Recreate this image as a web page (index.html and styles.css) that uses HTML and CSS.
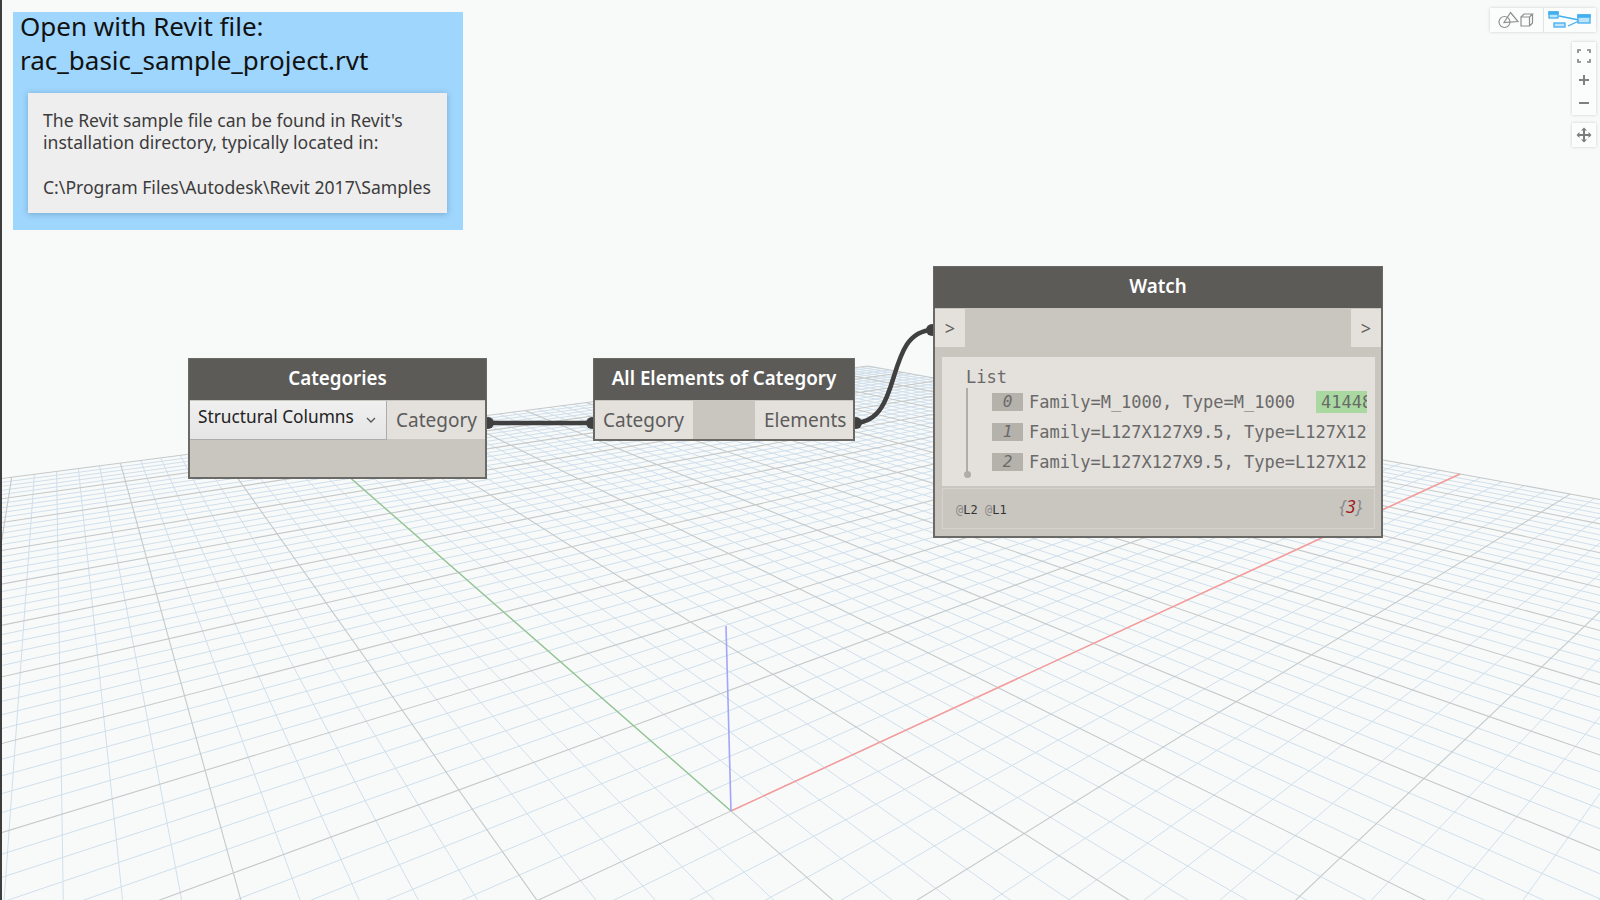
FILE: index.html
```html
<!DOCTYPE html>
<html lang="en">
<head>
    <meta charset="UTF-8">
    <title>Dynamo - Categories to Watch</title>
    <link rel="stylesheet" href="styles.css">
</head>
<body>
<div class="canvas">
    <svg id="grid" class="layer" width="1600" height="900"></svg>

    <svg class="layer" width="1600" height="900">
        <path class="wire" d="M487 423 L593 423"/>
        <path class="wire" d="M855 423 C 905 421, 883 331, 933 330"/>
        <circle class="nub" cx="488" cy="423" r="6"/>
        <circle class="nub" cx="592" cy="423" r="6"/>
        <circle class="nub" cx="856" cy="423" r="6"/>
        <circle class="nub" cx="932" cy="330" r="6"/>
    </svg>

    <div class="left-edge"></div>

    <div class="note">
        <h1 class="note-title">Open with Revit file:<br>rac_basic_sample_project.rvt</h1>
        <div class="note-card">
            <p>The Revit sample file can be found in Revit's<br>installation directory, typically located in:</p>
            <p>C:\Program Files\Autodesk\Revit 2017\Samples</p>
        </div>
    </div>

    <div class="node node-categories">
        <div class="node-header">Categories</div>
        <div class="node-ports">
            <div class="combo">
                <span>Structural Columns</span>
                <svg width="10" height="7" viewBox="0 0 10 7"><path d="M1 1 L5 5 L9 1" fill="none" stroke="#555" stroke-width="1.3"/></svg>
            </div>
            <div class="port port-out">Category</div>
        </div>
    </div>

    <div class="node node-elements">
        <div class="node-header">All Elements of Category</div>
        <div class="node-ports">
            <div class="port">Category</div>
            <div class="port-gap"></div>
            <div class="port">Elements</div>
        </div>
    </div>

    <div class="node node-watch">
        <div class="node-header">Watch</div>
        <div class="watch-ports">
            <div class="chevron">&gt;</div>
            <div class="chevron">&gt;</div>
        </div>
        <div class="watch-list">
            <div class="list-label">List</div>
            <div class="list-rows">
                <div class="row">
                    <span class="row-index">0</span>
                    <span class="row-text">Family=M_1000, Type=M_1000</span>
                    <span class="row-id">41448</span>
                </div>
                <div class="row">
                    <span class="row-index">1</span>
                    <span class="row-text">Family=L127X127X9.5, Type=L127X127X9.5</span>
                </div>
                <div class="row">
                    <span class="row-index">2</span>
                    <span class="row-text">Family=L127X127X9.5, Type=L127X127X9.5</span>
                </div>
            </div>
        </div>
        <div class="watch-footer">
            <span class="levels"><span class="at">@</span>L2 <span class="at">@</span>L1</span>
            <span class="count">{<b>3</b>}</span>
        </div>
    </div>

    <div class="toolbar">
        <div class="tool">
            <svg width="40" height="20" viewBox="0 0 40 20" fill="none" stroke="#8f8f8f" stroke-width="1.2">
                <circle cx="8.5" cy="12" r="5.5"/>
                <path d="M14.500 2.500 L22 11.500 L8 12.500 Z"/>
                <path d="M25 7 h8.500 v9 h-8.500 Z M25 7 l3 -3 h8.500 l-3 3 M33.500 16 l3 -3 v-9"/>
            </svg>
        </div>
        <div class="tool tool-active">
            <svg width="44" height="20" viewBox="0 0 44 20" fill="#bfe3fa" stroke="#41aeef" stroke-width="1.300">
                <path d="M11 6 L31 10 M20 16 L31 11" fill="none"/>
                <rect x="1" y="2" width="9" height="6"/>
                <path d="M1 2 h9 v2 h-9 Z" fill="#41aeef"/>
                <rect x="6" y="13" width="11" height="4"/>
                <rect x="30" y="5" width="12" height="8"/>
                <path d="M30 5 h12 v2 h-12 Z" fill="#41aeef"/>
            </svg>
        </div>
    </div>

    <div class="zoom-box">
        <svg width="14" height="14" viewBox="0 0 14 14" fill="none" stroke="#808080" stroke-width="1.600">
            <path d="M1 4 V1 H4 M10 1 H13 V4 M13 10 V13 H10 M4 13 H1 V10"/>
        </svg>
        <svg width="12" height="12" viewBox="0 0 12 12" fill="none" stroke="#808080" stroke-width="2">
            <path d="M1 6 H11 M6 1 V11"/>
        </svg>
        <svg width="12" height="12" viewBox="0 0 12 12" fill="none" stroke="#808080" stroke-width="2">
            <path d="M1 6 H11"/>
        </svg>
    </div>

    <div class="pan-box">
        <svg width="16" height="16" viewBox="0 0 16 16" fill="#7d7d7d">
            <path d="M7 3.500 H9 V7 H12.500 V5 L15.500 8 L12.500 11 V9 H9 V12.500 H11 L8 15.500 L5 12.500 H7 V9 H3.500 V11 L0.500 8 L3.500 5 V7 H7 V3.500 H5 L8 0.500 L11 3.500 Z"/>
        </svg>
    </div>
</div>
<script src="grid.js"></script>
</body>
</html>
```

FILE: styles.css
```css
body {
    margin: 0;
    background-color: #f8fafa;
    font-family: "Noto Sans", sans-serif;
}
.canvas {
    position: relative;
    width: 1600px;
    height: 900px;
    overflow: hidden;
    background-color: #f8fafa;
}
.layer {
    position: absolute;
    left: 0;
    top: 0;
}
.left-edge {
    position: absolute;
    left: 0;
    top: 0;
    width: 2px;
    height: 900px;
    background-color: #3d3d3d;
}
.wire {
    fill: none;
    stroke: #404040;
    stroke-width: 4.5;
}
.nub {
    fill: #404040;
}

/* note group */
.note {
    position: absolute;
    left: 13px;
    top: 12px;
    width: 450px;
    height: 218px;
    box-sizing: border-box;
    padding: 0 16px 0 15px;
    background-color: #9fd6fd;
}
.note-title {
    margin: -2px 0 0 -8px;
    height: 83px;
    font-size: 26px;
    font-weight: 400;
    line-height: 33.500px;
    color: #111;
    white-space: nowrap;
}
.note-card {
    display: flex;
    flex-direction: column;
    gap: 22px;
    height: 120px;
    box-sizing: border-box;
    padding: 16px 15px;
    background-color: #eeeeee;
    box-shadow: 0 1px 6px rgba(40, 80, 120, 0.35);
    color: #3c3c3c;
    font-size: 17.600px;
    line-height: 22.300px;
    white-space: nowrap;
}
.note-card p {
    margin: 0;
}

/* graph nodes */
.node {
    position: absolute;
    box-sizing: border-box;
    border: 2px solid #6b6965;
    background-color: #c9c5bf;
}
.node-categories {
    left: 188px;
    top: 358px;
    width: 299px;
    height: 121px;
}
.node-elements {
    left: 593px;
    top: 358px;
    width: 262px;
    height: 83px;
}
.node-watch {
    left: 933px;
    top: 266px;
    width: 450px;
    height: 272px;
}
.node-header {
    height: 41px;
    margin: -1px -1px 1px;
    background-color: #5c5b58;
    color: #fff;
    font-size: 18.800px;
    font-weight: 600;
    line-height: 39px;
    text-align: center;
}
.node-ports {
    display: flex;
    height: 38px;
}
.combo {
    display: flex;
    align-items: center;
    justify-content: space-between;
    width: 197px;
    height: 39px;
    box-sizing: border-box;
    padding: 0 10px 8px 8px;
    border-right: 1px solid #acacac;
    border-bottom: 1px solid #acacac;
    background: linear-gradient(#f0f0f0, #e5e5e5);
    color: #222;
    font-size: 17.300px;
}
.combo svg {
    margin-top: 8px;
}
.port {
    width: 98px;
    box-sizing: border-box;
    padding-left: 8px;
    background-color: #e4e0db;
    color: #5c5c5c;
    font-size: 19px;
    line-height: 38px;
}
.port:last-child {
    padding-left: 9px;
}
.port-out {
    width: 98px;
    padding-left: 10px;
}
.port-gap {
    width: 62px;
}

/* watch node */
.watch-ports {
    display: flex;
    justify-content: space-between;
    height: 38px;
}
.chevron {
    width: 30px;
    background-color: #e4e0db;
    color: #5c5c5c;
    font-size: 18px;
    line-height: 38px;
    text-align: center;
}
.watch-list {
    height: 129px;
    box-sizing: border-box;
    margin: 10px 6px 0 7px;
    padding: 8px 0 0 24px;
    background-color: #e4e0db;
    color: #6a6a6a;
    font-family: "DejaVu Sans Mono", monospace;
    font-size: 17px;
    overflow: hidden;
}
.list-label {
    height: 26px;
    line-height: 24px;
}
.list-rows {
    position: relative;
    display: flex;
    flex-direction: column;
    gap: 8px;
    width: 402px;
    box-sizing: border-box;
    padding-left: 26px;
}
.list-rows::before {
    content: "";
    position: absolute;
    left: 0;
    top: -3px;
    width: 2px;
    height: 86px;
    background-color: #b0aca6;
}
.list-rows::after {
    content: "";
    position: absolute;
    left: -2.500px;
    top: 80px;
    width: 7px;
    height: 7px;
    border-radius: 50%;
    background-color: #b0aca6;
}
.row {
    display: flex;
    align-items: center;
    height: 22px;
    white-space: nowrap;
    overflow: hidden;
}
.row-index {
    flex: none;
    width: 31px;
    height: 18px;
    margin-right: 6px;
    background-color: #b5b1ab;
    font-style: italic;
    line-height: 18px;
    text-align: center;
    font-size: 16px;
}
.row-text {
    flex: none;
}
.row-id {
    flex: none;
    width: 51px;
    height: 22px;
    margin-left: 21px;
    padding-left: 5px;
    box-sizing: border-box;
    background-color: #a9d9a0;
    line-height: 22px;
    overflow: hidden;
}
.watch-footer {
    display: flex;
    justify-content: space-between;
    align-items: center;
    height: 41px;
    box-sizing: border-box;
    margin: 2px 6px 0 7px;
    padding: 0 12px 0 13px;
    border: 1px solid #d6d2cc;
}
.levels {
    font-family: "DejaVu Sans Mono", monospace;
    font-size: 12px;
    color: #333;
    padding-top: 2px;
}
.levels .at {
    color: #8b8b8b;
}
.count {
    margin-bottom: 6px;
    font-size: 18px;
    font-style: italic;
    color: #8b8b8b;
}
.count b {
    font-weight: 400;
    color: #a02020;
}

/* view controls, top right */
.toolbar {
    position: absolute;
    left: 1490px;
    top: 8px;
    display: flex;
    width: 106px;
    height: 24px;
    background-color: #fbfcfc;
    box-shadow: 0 0 3px rgba(0, 0, 0, 0.18);
}
.tool {
    display: flex;
    align-items: center;
    justify-content: center;
    width: 53px;
}
.tool-active {
    border-left: 1px solid #e1e3e3;
}
.zoom-box,
.pan-box {
    position: absolute;
    left: 1572px;
    width: 24px;
    background-color: #fbfcfc;
    box-shadow: 0 0 3px rgba(0, 0, 0, 0.18);
    display: flex;
    flex-direction: column;
    align-items: center;
    justify-content: center;
}
.zoom-box {
    top: 42px;
    height: 73px;
    gap: 11px;
}
.pan-box {
    top: 123px;
    height: 24px;
}
```

FILE: grid.js
```js
// ground grid in perspective: four known corners of one quadrant, the rest is projected
var O = [731, 811], R = [1460, 474], F = [868, 366], G = [306, 439];

var dx1 = R[0] - F[0], dy1 = R[1] - F[1];
var dx2 = G[0] - F[0], dy2 = G[1] - F[1];
var sx = O[0] - R[0] + F[0] - G[0], sy = O[1] - R[1] + F[1] - G[1];
var den = dx1 * dy2 - dx2 * dy1;
var g = (sx * dy2 - dx2 * sy) / den;
var h = (dx1 * sy - sx * dy1) / den;

function project(u, v) {
    var w = g * u + h * v + 1;
    return [
        (((R[0] - O[0] + g * R[0]) * u + (G[0] - O[0] + h * G[0]) * v + O[0]) / w).toFixed(1),
        (((R[1] - O[1] + g * R[1]) * u + (G[1] - O[1] + h * G[1]) * v + O[1]) / w).toFixed(1)
    ];
}

// keep a line in front of the camera
function segment(fixedU, value) {
    var a = -1, b = 1;
    var k = fixedU ? h : g;
    var base = 1 + (fixedU ? g : h) * value;
    var limit = (0.06 - base) / k;
    if (limit > a) a = limit;
    if (a >= b) return "";
    var p = fixedU ? project(value, a) : project(a, value);
    var q = fixedU ? project(value, b) : project(b, value);
    return "M" + p[0] + " " + p[1] + "L" + q[0] + " " + q[1];
}

var minor = "", major = "";
for (var i = -50; i <= 50; i++) {
    var line = segment(true, i / 50) + segment(false, i / 50);
    if (i % 5 === 0) major += line;
    else minor += line;
}

function addPath(d, color, width) {
    var path = document.createElementNS("http://www.w3.org/2000/svg", "path");
    path.setAttribute("d", d);
    path.setAttribute("fill", "none");
    path.setAttribute("stroke", color);
    path.setAttribute("stroke-width", width);
    document.getElementById("grid").appendChild(path);
}

addPath(minor, "#d0dfeb", 1);
addPath(major, "#c4c9ca", 1.1);
addPath("M731 811L" + G[0] + " " + G[1], "#93c793", 1.3);
addPath("M731 811L" + R[0] + " " + R[1], "#f79c9c", 1.5);
addPath("M731 811L726 626", "#a4a4f8", 1.6);
```
